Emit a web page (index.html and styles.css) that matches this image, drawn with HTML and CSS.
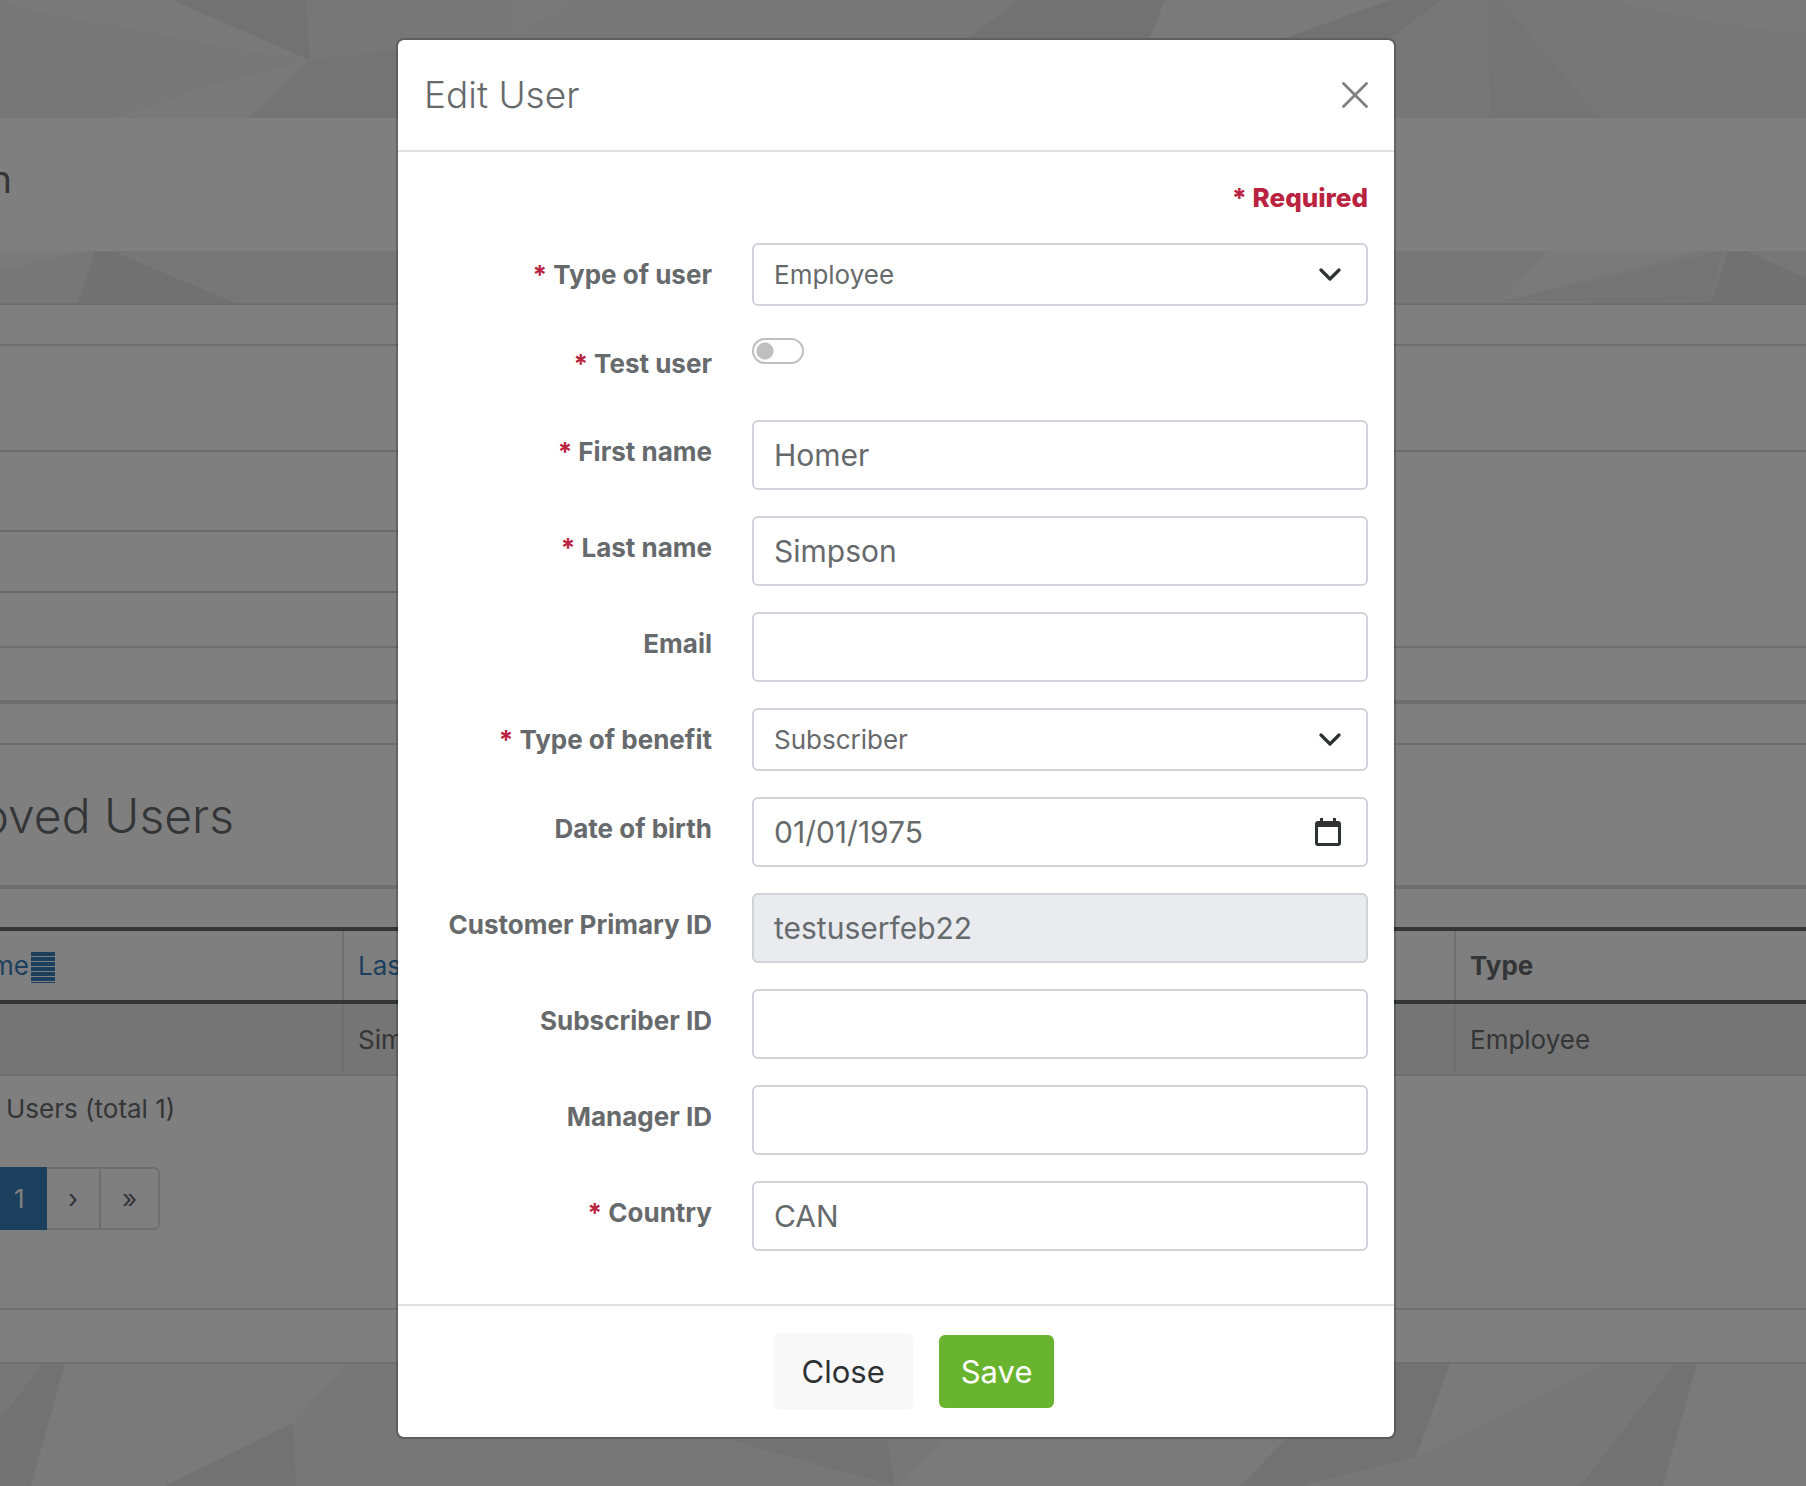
FILE: index.html
```html
<!DOCTYPE html>
<html lang="en">
<head>
  <meta charset="UTF-8">
  <meta name="viewport" content="width=device-width, initial-scale=1.0">
  <title>Edit User</title>
  <link rel="stylesheet" href="styles.css">
</head>
<body>
  <svg class="pattern" viewBox="0 0 1806 1486" preserveAspectRatio="xMidYMin slice" aria-hidden="true">
    <!-- header strip -->
    <polygon fill="#f2f2f2" points="0,0 172,0 310,60 240,50 20,8"/>
    <polygon fill="#e5e5e5" points="172,0 306,0 310,60"/>
    <polygon fill="#f2f2f2" points="310,60 248,118 115,118 215,84"/>
    <polygon fill="#e9e9e9" points="310,60 400,50 400,118 248,118"/>
    <polygon fill="#f2f2f2" points="510,0 575,0 510,38"/>
    <polygon fill="#e5e5e5" points="1019,0 1165,0 1150,38 968,38"/>
    <polygon fill="#f4f4f4" points="1165,0 1390,0 1290,38 1150,38"/>
    <polygon fill="#e5e5e5" points="1390,0 1442,0 1390,38 1285,38"/>
    <polygon fill="#e9e9e9" points="1488,0 1500,0 1600,118 1490,118"/>
    <polygon fill="#f2f2f2" points="1610,0 1806,0 1806,34 1720,24"/>
    <!-- strip above the panels -->
    <polygon fill="#f4f4f4" points="0,251 90,251 0,270"/>
    <polygon fill="#e3e3e3" points="95,251 112,251 236,303 78,303"/>
    <polygon fill="#f4f4f4" points="1548,251 1700,251 1504,300"/>
    <polygon fill="#e9e9e9" points="1504,301 1722,251 1710,303"/>
    <polygon fill="#e3e3e3" points="1728,251 1746,251 1806,278 1806,303 1711,303"/>
    <!-- footer strip -->
    <polygon fill="#e5e5e5" points="43,1364 65,1364 31,1486 0,1486 0,1419"/>
    <polygon fill="#f4f4f4" points="65,1364 346,1364 293,1423 165,1486 31,1486"/>
    <polygon fill="#e5e5e5" points="293,1423 296,1486 165,1486"/>
    <polygon fill="#e5e5e5" points="730,1440 888,1440 895,1486"/>
    <polygon fill="#f4f4f4" points="942,1440 1285,1440 1240,1486 900,1486"/>
    <polygon fill="#e5e5e5" points="1285,1440 1396,1364 1450,1364 1416,1457 1300,1486 1240,1486"/>
    <polygon fill="#f4f4f4" points="1450,1364 1602,1364 1416,1457"/>
    <polygon fill="#e5e5e5" points="1675,1364 1697,1364 1663,1486 1580,1486"/>
    <polygon fill="#f4f4f4" points="1697,1364 1806,1364 1806,1486 1663,1486"/>
  </svg>

  <main class="page">
    <header class="page-heading">
      <h2 class="page-title">Administration</h2>
    </header>

    <section class="ibox">
      <div class="ibox-bar"></div>
      <div class="ibox-title"></div>
      <div class="filters">
        <div class="filter-col">
          <div class="filter-row filter-row-tall"></div>
          <div class="filter-row"></div>
        </div>
      </div>
      <div class="ibox-foot"></div>
    </section>

    <section class="ibox ibox-users">
      <div class="ibox-gap"></div>
      <div class="users-title">
        <h1 class="users-heading">Approved Users</h1>
      </div>
      <table class="users">
        <thead>
          <tr>
            <th class="col-first"><a href="#">First name<span class="sort-icon"></span></a></th>
            <th class="col-last"><a href="#">Last name</a></th>
            <th class="col-type">Type</th>
          </tr>
        </thead>
        <tbody>
          <tr>
            <td class="col-first"></td>
            <td class="col-last">Simpson</td>
            <td class="col-type">Employee</td>
          </tr>
        </tbody>
      </table>
      <p class="total">Users (total 1)</p>
      <nav class="pagination">
        <a class="page-link active" href="#">1</a>
        <a class="page-link" href="#">›</a>
        <a class="page-link last" href="#">»</a>
      </nav>
    </section>
    <div class="page-foot"></div>
  </main>

  <div class="backdrop">
    <div class="modal" role="dialog" aria-labelledby="modalTitle">
      <div class="modal-header">
        <h4 class="modal-title" id="modalTitle">Edit User</h4>
        <button type="button" class="btn-x" aria-label="Close">
          <svg viewBox="0 0 26 26" width="26" height="26"><path d="M1.5 1.5l23 23M24.5 1.5l-23 23" stroke="#808080" stroke-width="2.8" stroke-linecap="round" fill="none"/></svg>
        </button>
      </div>

      <form class="modal-body" id="userForm">
        <p class="required">* Required</p>

        <div class="row">
          <label for="userType"><span class="star">*</span> Type of user</label>
          <div class="select-wrap">
            <select id="userType">
              <option>Employee</option>
              <option>Spouse</option>
            </select>
            <svg class="chevron" viewBox="0 0 22 14" width="22" height="14"><path d="M2 2l9 9 9-9" stroke="#2f3133" stroke-width="3.2" stroke-linecap="round" stroke-linejoin="round" fill="none"/></svg>
          </div>
        </div>

        <div class="row row-switch">
          <label for="testUser"><span class="star">*</span> Test user</label>
          <input type="checkbox" class="switch" id="testUser">
        </div>

        <div class="row">
          <label for="firstName"><span class="star">*</span> First name</label>
          <input type="text" class="field" id="firstName" value="Homer">
        </div>

        <div class="row">
          <label for="lastName"><span class="star">*</span> Last name</label>
          <input type="text" class="field" id="lastName" value="Simpson">
        </div>

        <div class="row">
          <label for="email">Email</label>
          <input type="email" class="field" id="email">
        </div>

        <div class="row">
          <label for="benefit"><span class="star">*</span> Type of benefit</label>
          <div class="select-wrap">
            <select id="benefit">
              <option>Subscriber</option>
              <option>Dependent</option>
            </select>
            <svg class="chevron" viewBox="0 0 22 14" width="22" height="14"><path d="M2 2l9 9 9-9" stroke="#2f3133" stroke-width="3.2" stroke-linecap="round" stroke-linejoin="round" fill="none"/></svg>
          </div>
        </div>

        <div class="row">
          <label for="dob">Date of birth</label>
          <div class="select-wrap">
            <input type="text" class="field" id="dob" value="01/01/1975">
            <svg class="calendar" viewBox="0 0 26 28" width="26" height="28"><path fill="#2f3133" fill-rule="evenodd" d="M5 0h3v3h10V0h3v3h2a3 3 0 0 1 3 3v19a3 3 0 0 1-3 3H3a3 3 0 0 1-3-3V6a3 3 0 0 1 3-3h2zM3 9v16h20V9z"/></svg>
          </div>
        </div>

        <div class="row">
          <label for="customerId">Customer Primary ID</label>
          <input type="text" class="field" id="customerId" value="testuserfeb22" disabled>
        </div>

        <div class="row">
          <label for="subscriberId">Subscriber ID</label>
          <input type="text" class="field" id="subscriberId">
        </div>

        <div class="row">
          <label for="managerId">Manager ID</label>
          <input type="text" class="field" id="managerId">
        </div>

        <div class="row">
          <label for="country"><span class="star">*</span> Country</label>
          <input type="text" class="field" id="country" value="CAN">
        </div>
      </form>

      <div class="modal-footer">
        <button type="button" class="btn btn-close">Close</button>
        <button type="submit" class="btn btn-save" form="userForm">Save</button>
      </div>
    </div>
  </div>
</body>
</html>
```

FILE: styles.css
```css
* {
  box-sizing: border-box;
}
body {
  margin: 0;
  min-height: 100vh;
  position: relative;
  overflow: hidden;
  background-color: #eee;
  color: #676a6c;
  font-family: Inter, "Liberation Sans", sans-serif;
  font-size: 26px;
  line-height: 39px;
}
h1, h2, h4, p {
  margin: 0;
  font-weight: 300;
}
a {
  color: #387ebc;
  text-decoration: none;
}

/* page behind the modal */
.pattern {
  position: absolute;
  inset: 0;
  width: 100%;
  height: 100%;
}
.page {
  position: relative;
  margin-left: -240px;
  padding-top: 118px;
}
.page-heading {
  display: flex;
  height: 133px;
  padding-top: 34px;
  background-color: #fff;
}
.page-title {
  display: flex;
  justify-content: flex-end;
  width: 252px;
  font-size: 38px;
  line-height: 54px;
  font-weight: 400;
}
.ibox {
  background-color: #fff;
}
.ibox-bar {
  height: 43px;
  margin-top: 52px;
  border-top: 2px solid #dedede;
  border-bottom: 2px solid #dedede;
}
.ibox-title {
  height: 106px;
  border-bottom: 2px solid #dadada;
}
.filters {
  height: 196px;
  border-bottom: 2px solid #dedede;
}
.filter-col {
  width: 50%;
}
.filter-row {
  height: 61px;
  border-bottom: 2px solid #d2d2d2;
}
.filter-row-tall {
  height: 80px;
}
.ibox-foot {
  height: 52px;
}
.ibox-users {
  border-top: 4px solid #dcdfdf;
  border-bottom: 2px solid #dedede;
}
.ibox-gap {
  height: 41px;
  border-bottom: 2px solid #dedede;
}
.users-title {
  height: 144px;
  padding-top: 38px;
  border-bottom: 4px solid #dcdfdf;
}
.users-heading {
  display: flex;
  justify-content: flex-end;
  width: 474px;
  font-size: 48px;
  line-height: 66px;
}
.users {
  width: 100%;
  margin-top: 38px;
  border-collapse: collapse;
  table-layout: fixed;
}
.users th,
.users td {
  padding: 12px 14px;
  text-align: left;
  border-left: 2px solid #dedede;
}
.users thead tr {
  height: 73px;
  border-top: 4px solid #676a6c;
  border-bottom: 4px solid #676a6c;
}
.users tbody tr {
  height: 73px;
  background-color: #ebebeb;
  border-bottom: 2px solid #dedede;
}
.users a {
  font-weight: 400;
}
.col-first {
  width: 582px;
}
.users th.col-first {
  padding-left: 138px;
}
.col-last {
  width: 1112px;
}
.sort-icon {
  display: inline-block;
  width: 24px;
  height: 31px;
  margin-left: 2px;
  vertical-align: middle;
  background: repeating-linear-gradient(#387ebc 0 4px, transparent 4px 5px);
}
.total {
  padding: 33px 0 0 246px;
  font-weight: 400;
  line-height: 0;
}
.pagination {
  display: flex;
  margin: 58px 0 78px 220px;
}
.page-link {
  height: 63px;
  padding: 10px 21px;
  color: #676a6c;
  border: 2px solid #dedede;
  border-left: 0;
}
.page-link.active {
  color: #fff;
  width: 67px;
  padding-left: 34px;
  background-color: #387ebc;
  border-color: #387ebc;
}
.page-link.last {
  border-radius: 0 6px 6px 0;
}
.page-foot {
  height: 54px;
  background-color: #fff;
  border-bottom: 2px solid #dedede;
}

/* modal */
.backdrop {
  position: absolute;
  inset: 0;
  padding: 38px 24px 0 10px;
  background-color: rgba(0, 0, 0, 0.5);
}
.modal {
  max-width: 1000px;
  margin: 0 auto;
  background-color: #fff;
  background-clip: padding-box;
  border: 2px solid rgba(0, 0, 0, 0.2);
  border-radius: 8px;
}
.modal-header {
  display: flex;
  justify-content: space-between;
  align-items: center;
  padding: 28px 26px;
  border-bottom: 2px solid #dee2e6;
}
.modal-title {
  font-size: 37px;
  line-height: 54px;
}
.btn-x {
  padding: 0;
  border: 0;
  background: none;
  cursor: pointer;
}
.btn-x svg {
  display: block;
}
.modal-body {
  display: flex;
  flex-direction: column;
  gap: 26px;
  padding: 26px 26px 53px;
}
.required {
  color: #ba2340;
  font-weight: 800;
  text-align: right;
}
.row {
  display: grid;
  grid-template-columns: 288fr 616fr;
  column-gap: 40px;
  align-items: start;
}
.row-switch {
  height: 62px;
}
.row label {
  padding-top: 12px;
  font-weight: 700;
  text-align: right;
}
.star {
  color: #ba2340;
}
.field,
select {
  display: block;
  width: 100%;
  height: 70px;
  padding: 0 20px;
  color: #676a6c;
  background-color: #fff;
  border: 2px solid #ced4da;
  border-radius: 6px;
  font-family: inherit;
  font-size: 30px;
}
.field:disabled {
  background-color: #e9ebef;
}
select {
  height: 63px;
  font-size: 26px;
  appearance: none;
}
.select-wrap {
  position: relative;
}
.chevron,
.calendar {
  position: absolute;
  top: 0;
  bottom: 0;
  right: 27px;
  margin: auto;
  pointer-events: none;
}
.switch {
  appearance: none;
  width: 52px;
  height: 26px;
  margin: 6px 0;
  border: 2px solid #bfbfbf;
  border-radius: 13px;
  background: radial-gradient(circle at 11px 11px, #bfbfbf 8px, transparent 9px);
}
.modal-footer {
  display: flex;
  justify-content: center;
  align-items: center;
  gap: 26px;
  padding: 27px 6px 27px 42px;
  border-top: 2px solid #dee2e6;
}
.btn {
  border: 0;
  border-radius: 6px;
  font-family: inherit;
  font-size: 31px;
  line-height: 49px;
  cursor: pointer;
}
.btn-close {
  padding: 14px 28px;
  color: #2f3133;
  background-color: #f8f8f9;
}
.btn-save {
  padding: 12px 22px;
  color: #fff;
  background-color: #69b42e;
}
```
